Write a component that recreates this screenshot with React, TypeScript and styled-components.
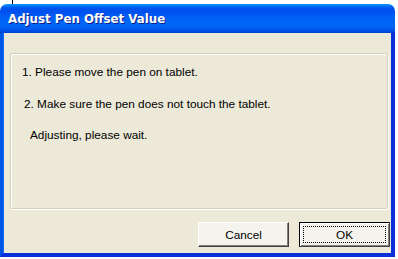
import React from "react";
import styled, { createGlobalStyle } from "styled-components";

const Global = createGlobalStyle`
  html, body { margin: 0; padding: 0; background: #ffffff; }
  body { width: 398px; height: 259px; overflow: hidden; }
`;

const Page = styled.div`
  position: relative;
  padding-top: 4px;
  width: 398px;
  height: 259px;
  box-sizing: border-box;
`;

const Cursor = styled.div`
  position: absolute;
  left: 12px;
  top: 0;
  width: 1px;
  height: 4px;
  background: #000;
`;

const Win = styled.div`
  width: 395px;
  display: flex;
  flex-direction: column;
`;

const TitleBar = styled.div`
  height: 29px;
  box-sizing: border-box;
  border-radius: 7px 7px 0 0;
  background: linear-gradient(
    to bottom,
    #0997ff 0px,
    #0053ee 4px,
    #0050ee 8px,
    #0062f7 14px,
    #0066f7 20px,
    #005ef5 24px,
    #0048dd 28px,
    #0040c8 29px
  );
  display: flex;
  align-items: center;
  padding-left: 8px;
  padding-top: 1px;
`;

const Title = styled.span`
  color: #ffffff;
  font-family: "DejaVu Sans", sans-serif;
  font-weight: bold;
  font-size: 11.8px;
  text-shadow: 1px 1px 0 #0a1e8c;
`;

const Body = styled.div`
  background: #ece9d8;
  border-left: 3px solid #0055e5;
  border-right: 4px solid #0831d9;
  border-bottom: 4px solid #0831d9;
  box-shadow: inset 1px 0 0 #166aee;
  height: 200px;
  padding: 20px 1px 0 7px;
  display: flex;
  flex-direction: column;
`;

const Group = styled.div`
  height: 143px;
  margin-right: 2px;
  border: 1px solid #d0d0bf;
  box-shadow: inset 1px 1px 0 #ffffff, 1px 1px 0 #ffffff;
  border-radius: 2px;
  display: flex;
  flex-direction: column;
  padding-top: 11px;
  box-sizing: content-box;
`;

const Line = styled.div<{ $indent: number }>`
  font-family: "Liberation Sans", Arial, sans-serif;
  font-size: 11.8px;
  color: #000;
  padding-left: ${(p) => p.$indent}px;
  height: 31.5px;
  line-height: 14px;
`;

const Buttons = styled.div`
  display: flex;
  justify-content: flex-end;
  gap: 10px;
  margin-top: 13px;
`;

const Button = styled.button<{ $default?: boolean }>`
  width: 91px;
  height: 25px;
  box-sizing: border-box;
  font-family: "Liberation Sans", Arial, sans-serif;
  font-size: 11.8px;
  color: #000;
  background: #f4f3ee;
  border: 1px solid ${(p) => (p.$default ? "#000000" : "#ffffff")};
  border-right-color: #404040;
  border-bottom-color: #404040;
  box-shadow: ${(p) =>
    p.$default
      ? "inset 1px 1px 0 #ffffff, inset -1px -1px 0 #808080"
      : "inset -1px -1px 0 #808080, inset 1px 1px 0 #f4f3ee"};
  padding: 0;
  position: relative;
  display: flex;
  align-items: center;
  justify-content: center;
`;

const Focus = styled.span`
  position: absolute;
  left: 3px;
  top: 3px;
  right: 3px;
  bottom: 3px;
  border: 1px dotted #000;
`;

export default function App() {
  return (
    <>
      <Global />
      <Page>
        <Cursor />
        <Win>
          <TitleBar>
            <Title>Adjust Pen Offset Value</Title>
          </TitleBar>
          <Body>
            <Group>
              <Line $indent={11}>1. Please move the pen on tablet.</Line>
              <Line $indent={13}>2. Make sure the pen does not touch the tablet.</Line>
              <Line $indent={19}>Adjusting, please wait.</Line>
            </Group>
            <Buttons>
              <Button>Cancel</Button>
              <Button $default>
                <Focus />
                OK
              </Button>
            </Buttons>
          </Body>
        </Win>
      </Page>
    </>
  );
}
